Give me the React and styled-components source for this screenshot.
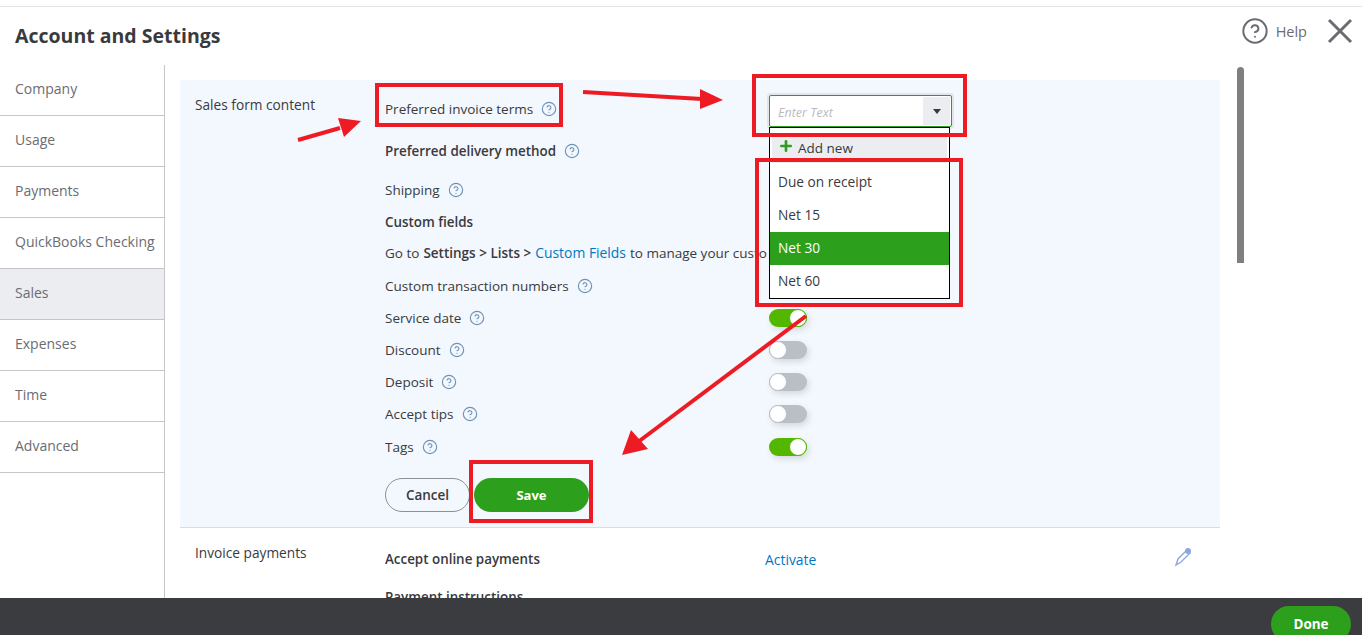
import React from 'react';
import styled, { createGlobalStyle } from 'styled-components';
import { CircleHelp, Plus } from 'lucide-react';

const GlobalStyle = createGlobalStyle`
    html, body {
        margin: 0;
        padding: 0;
        height: 100%;
        background: #fff;
    }
    body {
        font-family: "Open Sans", "Liberation Sans", sans-serif;
        color: #393a3d;
        overflow: hidden;
    }
`;

const Page = styled.div`
    position: relative;
    display: flex;
    flex-direction: column;
    height: 635px;
    padding-top: 6px;
    box-sizing: border-box;
    overflow: hidden;
`;

const Header = styled.header`
    display: flex;
    justify-content: space-between;
    align-items: flex-start;
    height: 59px;
    flex-shrink: 0;
    box-sizing: border-box;
    border-top: 1px solid #e3e4e6;
    padding: 10px 9px 0 15px;
`;

const Title = styled.h1`
    margin: 6px 0 0;
    font-family: "Open Sans", sans-serif;
    font-size: 19.5px;
    line-height: 26px;
    font-weight: 700;
    color: #393a3d;
`;

const HeaderActions = styled.div`
    display: flex;
    align-items: center;
`;

const HelpLink = styled.span`
    margin: 0 20px 0 7px;
    font-size: 14.5px;
    color: #6b6c72;
`;

const Body = styled.div`
    display: flex;
    flex: 1;
    min-height: 0;
`;

const Sidebar = styled.nav`
    width: 165px;
    flex-shrink: 0;
    box-sizing: border-box;
    border-right: 1px solid #c4c6ca;
`;

const SideItem = styled.div`
    display: flex;
    align-items: center;
    height: 51px;
    box-sizing: border-box;
    padding: 0 0 4px 15px;
    border-bottom: 1px solid #c4c6ca;
    font-size: 14px;
    white-space: nowrap;
    color: #6b6c72;
    background: ${({ $active }) => ($active ? '#ecedf0' : 'transparent')};
`;

const Content = styled.main`
    width: 1040px;
    margin-left: 15px;
    padding-top: 15px;
    flex-shrink: 0;
`;

const Panel = styled.section`
    display: grid;
    grid-template-columns: 190px 384px 1fr;
    padding-left: 15px;
    box-sizing: border-box;
    background: ${({ $tint }) => ($tint ? '#f3f7fe' : '#fff')};
    border-bottom: ${({ $tint }) => ($tint ? '1px solid #dcdde0' : 'none')};
    height: ${({ $height }) => $height}px;
`;

const SectionLabel = styled.div`
    font-size: 13.7px;
    line-height: 18px;
    padding-top: ${({ $top }) => $top}px;
    color: #393a3d;
`;

const Rows = styled.div`
    grid-column: 2 / 4;
    padding-top: ${({ $top }) => $top}px;
`;

const Row = styled.div`
    display: grid;
    grid-template-columns: 384px 1fr;
    align-items: center;
    height: ${({ $h }) => $h}px;
`;

const RowLabel = styled.div`
    display: flex;
    align-items: center;
    gap: 8px;
    padding-bottom: ${({ $lift }) => $lift || 0}px;
    font-size: ${({ $bold }) => ($bold ? '13.4px' : '13.5px')};
    white-space: nowrap;
    overflow: hidden;
    font-weight: ${({ $bold }) => ($bold ? 600 : 400)};
    color: #393a3d;
`;

const Strong = styled.b`
    font-weight: 600;
    margin: 0 4px;
`;

const Link = styled.a`
    color: #0077c5;
    font-size: 13.9px;
    margin-right: 4px;
    margin-left: ${({ $shift }) => $shift || 0}px;
`;

const ToggleTrack = styled.span`
    position: relative;
    display: block;
    width: 38px;
    height: 18px;
    border-radius: 9px;
    background: ${({ $on }) => ($on ? '#53b700' : '#babec5')};
    box-shadow: 2px 3px 6px rgba(0, 0, 0, 0.12);
`;

const ToggleKnob = styled.span`
    position: absolute;
    top: 0;
    left: ${({ $on }) => ($on ? '20px' : '0')};
    width: 18px;
    height: 18px;
    box-sizing: border-box;
    border-radius: 50%;
    background: #fff;
    border: 1px solid ${({ $on }) => ($on ? '#53b700' : '#babec5')};
`;

const ButtonRow = styled.div`
    display: flex;
    gap: 4px;
    margin-top: 15px;
`;

const CancelButton = styled.button`
    width: 85px;
    height: 34px;
    border: 1px solid #8d9096;
    border-radius: 17px;
    background: transparent;
    font: 600 13.5px "Open Sans", sans-serif;
    color: #393a3d;
`;

const SaveButton = styled.button`
    width: 115px;
    height: 34px;
    border: none;
    border-radius: 17px;
    background: #2ca01c;
    font: 700 13px "Open Sans", sans-serif;
    color: #fff;
`;

const Scrollbar = styled.div`
    width: 7px;
    height: 196px;
    margin: 2px 0 0 17px;
    border-radius: 4px 4px 0 0;
    background: #7f7f7f;
`;

const Footer = styled.footer`
    display: flex;
    justify-content: flex-end;
    height: 37px;
    flex-shrink: 0;
    box-sizing: border-box;
    padding: 8px 11px 0 0;
    background: #3b3c40;
    overflow: hidden;
`;

const DoneButton = styled.button`
    width: 80px;
    height: 36px;
    border: none;
    border-radius: 18px;
    background: #2ca01c;
    font: 700 13.5px "Open Sans", sans-serif;
    color: #fff;
`;

const Combo = styled.div`
    position: absolute;
    left: 769px;
    top: 95px;
    width: 183px;
    height: 32px;
    display: flex;
    box-sizing: border-box;
    border: 1px solid #2ca01c;
    border-radius: 2px;
    background: #fff;
    box-shadow: 0 0 0 2px #e3e5e8;
`;

const ComboText = styled.span`
    flex: 1;
    padding: 0 8px;
    line-height: 33px;
    font-size: 12.5px;
    font-style: italic;
    color: #b9bbbf;
`;

const ComboArrow = styled.span`
    display: flex;
    align-items: center;
    justify-content: center;
    width: 27px;
    margin: 1px;
    background: #ecedf0;
    &::after {
        content: '';
        border-left: 4px solid transparent;
        border-right: 4px solid transparent;
        border-top: 5px solid #393a3d;
    }
`;

const Menu = styled.div`
    position: absolute;
    left: 769px;
    top: 127px;
    width: 181px;
    height: 172px;
    box-sizing: border-box;
    border: 1px solid #000;
    background: #fff;
    padding-top: 9px;
`;

const AddNew = styled.div`
    display: flex;
    align-items: center;
    gap: 4px;
    height: 26px;
    box-sizing: border-box;
    margin: 0 2px 3px;
    padding: 0 0 5px 6px;
    background: #ecedf0;
    font-size: 13.5px;
    color: #393a3d;
`;

const AddIcon = styled(Plus)`
    margin-top: -3px;
`;

const MenuItem = styled.div`
    display: flex;
    align-items: center;
    height: 33px;
    box-sizing: border-box;
    padding: 0 0 2px 8px;
    font-size: 13.7px;
    color: ${({ $selected }) => ($selected ? '#fff' : '#393a3d')};
    background: ${({ $selected }) => ($selected ? '#2ca01c' : 'transparent')};
`;

const Annotations = styled.svg`
    position: absolute;
    left: 0;
    top: 0;
    pointer-events: none;
`;

const Hint = () => <CircleHelp size={16} color="#6f93b8" strokeWidth={1.7} />;

const Toggle = ({ on }) => (
    <ToggleTrack $on={on}>
        <ToggleKnob $on={on} />
    </ToggleTrack>
);

const sections = ['Company', 'Usage', 'Payments', 'QuickBooks Checking', 'Sales', 'Expenses', 'Time', 'Advanced'];

const toggles = [
    { label: 'Service date', on: true, h: 32 },
    { label: 'Discount', on: false, h: 32 },
    { label: 'Deposit', on: false, h: 32 },
    { label: 'Accept tips', on: false, h: 32 },
    { label: 'Tags', on: true, h: 33 },
];

const redBoxes = [
    [377, 85, 184, 40],
    [754, 76, 211, 59],
    [757, 160, 204, 145],
    [471, 462, 120, 59],
];

// line end, then the arrow head
const redArrows = [
    { d: 'M298 140 L340 128', head: '338,118 361,121 344,137' },
    { d: 'M583 92 L702 99', head: '700,89 723,100 700,109' },
    { d: 'M806 316 L638 442', head: '631,430 622,455 648,449' },
];

function App() {
    return (
        <Page>
            <GlobalStyle />
            <Header>
                <Title>Account and Settings</Title>
                <HeaderActions>
                    <CircleHelp size={28} color="#6b6c72" strokeWidth={1.7} />
                    <HelpLink>Help</HelpLink>
                    <svg width="26" height="26" viewBox="0 0 26 26">
                        <path d="M2 2 L24 24 M24 2 L2 24" stroke="#6b6c72" strokeWidth="3" fill="none" />
                    </svg>
                </HeaderActions>
            </Header>
            <Body>
                <Sidebar>
                    {sections.map((name) => (
                        <SideItem key={name} $active={name === 'Sales'}>{name}</SideItem>
                    ))}
                </Sidebar>
                <Content>
                    <Panel $tint $height={448}>
                        <SectionLabel $top={16}>Sales form content</SectionLabel>
                        <Rows $top={8}>
                            <Row $h={42}>
                                <RowLabel>Preferred invoice terms <Hint /></RowLabel>
                            </Row>
                            <Row $h={42}>
                                <RowLabel $bold>Preferred delivery method <Hint /></RowLabel>
                            </Row>
                            <Row $h={36}>
                                <RowLabel>Shipping <Hint /></RowLabel>
                            </Row>
                            <Row $h={28}>
                                <RowLabel $bold>Custom fields</RowLabel>
                            </Row>
                            <Row $h={34}>
                                <RowLabel $lift={2}>
                                    <span>
                                        Go to<Strong>Settings &gt; Lists &gt;</Strong>
                                        <Link>Custom Fields</Link>
                                        to manage your custo
                                    </span>
                                </RowLabel>
                            </Row>
                            <Row $h={32}>
                                <RowLabel>Custom transaction numbers <Hint /></RowLabel>
                            </Row>
                            {toggles.map((item) => (
                                <Row key={item.label} $h={item.h}>
                                    <RowLabel>{item.label} <Hint /></RowLabel>
                                    <Toggle on={item.on} />
                                </Row>
                            ))}
                            <ButtonRow>
                                <CancelButton>Cancel</CancelButton>
                                <SaveButton>Save</SaveButton>
                            </ButtonRow>
                        </Rows>
                    </Panel>
                    <Panel $height={72}>
                        <SectionLabel $top={16}>Invoice payments</SectionLabel>
                        <Rows $top={10}>
                            <Row $h={42}>
                                <RowLabel $bold>Accept online payments</RowLabel>
                                <Link as="span" $shift={-4}>Activate</Link>
                            </Row>
                            <Row $h={34}>
                                <RowLabel $bold>Payment instructions</RowLabel>
                            </Row>
                        </Rows>
                    </Panel>
                </Content>
                <Scrollbar />
            </Body>
            <Footer>
                <DoneButton>Done</DoneButton>
            </Footer>

            <Combo>
                <ComboText>Enter Text</ComboText>
                <ComboArrow />
            </Combo>
            <Menu>
                <AddNew>
                    <AddIcon size={16} color="#2ca01c" strokeWidth={4} />
                    Add new
                </AddNew>
                <MenuItem>Due on receipt</MenuItem>
                <MenuItem>Net 15</MenuItem>
                <MenuItem $selected>Net 30</MenuItem>
                <MenuItem>Net 60</MenuItem>
            </Menu>

            <Annotations width="1362" height="635" viewBox="0 0 1362 635">
                <path
                    d="M1176 565 L1178 559 L1187 550 L1190 553 L1181 562 Z"
                    fill="none"
                    stroke="#8ea6dd"
                    strokeWidth="1.4"
                />
                <circle cx="1188" cy="551" r="3" fill="#8ea6dd" />
                {redBoxes.map(([x, y, w, h]) => (
                    <rect key={x} x={x} y={y} width={w} height={h} fill="none" stroke="#ed1c24" strokeWidth="4" />
                ))}
                {redArrows.map((arrow) => (
                    <g key={arrow.d}>
                        <path d={arrow.d} stroke="#ed1c24" strokeWidth="4" fill="none" />
                        <polygon points={arrow.head} fill="#ed1c24" />
                    </g>
                ))}
            </Annotations>
        </Page>
    );
}

export default App;
